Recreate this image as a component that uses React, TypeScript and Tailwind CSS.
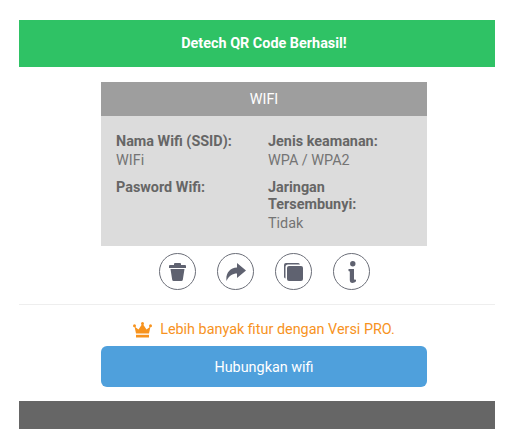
const ICON_BTN = "flex h-[37px] w-[37px] items-center justify-center rounded-full border border-[#6b6e78]";

function Crown() {
  return (
    <svg width="19" height="16" viewBox="0 0 19 16" fill="#f7931e">
      <path d="M1.500 4.500 L5.500 7.500 L9.500 1.500 L13.500 7.500 L17.500 4.500 L16 11.500 H3 Z" />
      <circle cx="1.500" cy="3.800" r="1.500" />
      <circle cx="9.500" cy="1.500" r="1.500" />
      <circle cx="17.500" cy="3.800" r="1.500" />
      <rect x="3" y="12.800" width="13" height="2.700" />
    </svg>
  );
}

export default function App() {
  return (
    <div className="h-[447px] w-[522px] bg-white pt-5 font-['Roboto',sans-serif]">
      <div className="mx-[19px] w-[476px]">
        {/* Banner */}
        <div className="flex h-[47px] items-center justify-center bg-[#2fc265] pl-[14px] text-[14.4px] font-bold text-white">
          Detech QR Code Berhasil!
        </div>

        {/* Card */}
        <div className="ml-[82px] mt-[15px] w-[326px]">
          <div className="flex h-[34px] items-center justify-center bg-[#9e9e9e] pt-[1px] text-[14.4px] text-white">
            WIFI
          </div>
          <div className="grid h-[130px] grid-cols-[152px_1fr] content-start gap-y-[9px] bg-[#dcdcdc] px-[15px] pt-[17px] text-[14.4px] leading-[18px] text-[#747474]">
            <div>
              <p className="font-bold text-[#666666]">Nama Wifi (SSID):</p>
              <p className="mt-[1px]">WIFi</p>
            </div>
            <div>
              <p className="font-bold text-[#666666]">Jenis keamanan:</p>
              <p className="mt-[1px]">WPA / WPA2</p>
            </div>
            <div>
              <p className="font-bold text-[#666666]">Pasword Wifi:</p>
            </div>
            <div>
              <p className="font-bold leading-[17px] text-[#666666]">
                Jaringan
                <br />
                Tersembunyi:
              </p>
              <p className="mt-[2px]">Tidak</p>
            </div>
          </div>
        </div>

        {/* Actions */}
        <div className="mt-[7px] flex justify-center gap-[21px] pl-[15px]">
          <div className={ICON_BTN}>
            <svg width="17" height="18" viewBox="0 0 17 18" fill="#5f6270">
              <path d="M5 2 V1 a1 1 0 0 1 1 -1 h5 a1 1 0 0 1 1 1 v1 h4 a1 1 0 0 1 1 1 v2 H0 V3 a1 1 0 0 1 1 -1 Z" />
              <path d="M1.500 6 H15.500 L13.800 16.700 a1.500 1.500 0 0 1 -1.500 1.300 H4.700 a1.500 1.500 0 0 1 -1.500 -1.300 Z" />
            </svg>
          </div>
          <div className={ICON_BTN}>
            <svg width="20" height="18" viewBox="0 0 20 18" fill="#5f6270">
              <path d="M11 0 L20 7.500 L11 15 V10.500 C6.500 10.500 3 12.500 0.500 18 C-0.500 10.500 3.500 5 11 4.500 Z" />
            </svg>
          </div>
          <div className={ICON_BTN}>
            <svg width="19" height="18" viewBox="0 0 19 18" fill="#5f6270">
              <path d="M2 0 H14 a2 2 0 0 1 2 1.500 H4 a2.500 2.500 0 0 0 -2.500 2.500 V15.500 A2 2 0 0 1 0 14 V2 A2 2 0 0 1 2 0 Z" />
              <rect x="3" y="3" width="16" height="15" rx="2" />
            </svg>
          </div>
          <div className={ICON_BTN}>
            <svg width="8" height="22" viewBox="0 0 8 22" fill="#5f6270">
              <circle cx="4.800" cy="2.700" r="2.700" />
              <path d="M0.500 8 H6 V17.500 C6 18.800 7 19 8 18.500 V20.300 C7 21.400 5.700 22 4.500 22 C2.700 22 1.800 20.800 1.800 19 V10.500 L0.500 10 Z" />
            </svg>
          </div>
        </div>

        <div className="mt-[14px] h-px bg-[#eeeeee]" />

        {/* Pro hint */}
        <div className="mt-[15px] flex items-center justify-center gap-[8px] pl-[14px] text-[14.4px] leading-[20px] text-[#f7931e]">
          <Crown />
          <span>Lebih banyak fitur dengan Versi PRO.</span>
        </div>

        <div className="ml-[82px] mt-[6px] flex h-[41px] w-[326px] items-center justify-center rounded-[6px] bg-[#4fa0dc] pt-[2px] text-[14.4px] text-white">
          Hubungkan wifi
        </div>

        <div className="mt-[14px] h-[28px] bg-[#666666]" />
      </div>
    </div>
  );
}
